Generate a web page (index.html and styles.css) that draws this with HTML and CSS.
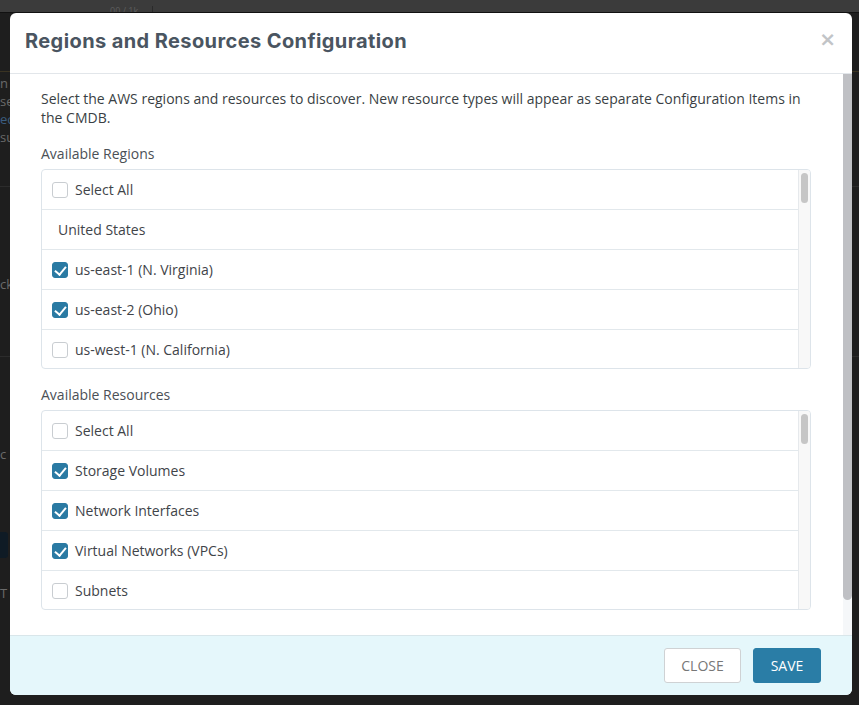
FILE: index.html
```html
<!DOCTYPE html>
<html>
  <head>
    <meta charset="utf-8">
    <title>Regions and Resources Configuration</title>
    <link rel="stylesheet" href="styles.css">
  </head>
  <body>
    <div class="page">
      <div class="page-top">
        <span class="page-count">00 / 1k</span>
      </div>
      <div class="page-main">
        <div class="page-block">
          <p>n</p>
          <p>se</p>
          <p class="page-link">ec</p>
          <p>su</p>
        </div>
        <div class="page-block page-block-tall">
          <p>ck</p>
        </div>
        <div class="page-block page-block-tall">
          <p>c</p>
        </div>
        <div class="page-button"></div>
        <p class="page-foot">T</p>
      </div>
    </div>

    <div class="modal">
      <div class="modal-header">
        <h4 class="modal-title">Regions and Resources Configuration</h4>
        <span class="modal-close">&times;</span>
      </div>

      <div class="modal-main">
        <div class="modal-body">
          <p class="intro">Select the AWS regions and resources to discover. New resource types will appear as separate Configuration Items in the CMDB.</p>

          <div class="field-label">Available Regions</div>
          <div class="pick-box">
            <ul class="pick-list">
              <li><span class="check"></span>Select All</li>
              <li class="group">United States</li>
              <li><span class="check on"></span>us-east-1 (N. Virginia)</li>
              <li><span class="check on"></span>us-east-2 (Ohio)</li>
              <li><span class="check"></span>us-west-1 (N. California)</li>
            </ul>
            <div class="pick-bar"><div class="pick-thumb"></div></div>
          </div>

          <div class="field-label">Available Resources</div>
          <div class="pick-box">
            <ul class="pick-list">
              <li><span class="check"></span>Select All</li>
              <li><span class="check on"></span>Storage Volumes</li>
              <li><span class="check on"></span>Network Interfaces</li>
              <li><span class="check on"></span>Virtual Networks (VPCs)</li>
              <li><span class="check"></span>Subnets</li>
            </ul>
            <div class="pick-bar"><div class="pick-thumb"></div></div>
          </div>
        </div>
        <div class="modal-scroll"><div class="modal-thumb"></div></div>
      </div>

      <div class="modal-footer">
        <button class="btn btn-close">Close</button>
        <button class="btn btn-save">Save</button>
      </div>
    </div>
  </body>
</html>
```

FILE: styles.css
```css
* {
  box-sizing: border-box;
}

body {
  margin: 0;
  background: #1e1e1e;
  font-family: "Open Sans", "Noto Sans", Arial, sans-serif;
  overflow: hidden;
}

/* page behind the dialog, dimmed */
.page {
  height: 705px;
  overflow: hidden;
  color: #6a6a6a;
  font-size: 13px;
}

.page-top {
  height: 13px;
  background: #3b3b3b;
  border-bottom: 1px solid #111;
  overflow: hidden;
}

.page-count {
  display: inline-block;
  margin-left: 110px;
  padding-right: 14px;
  height: 12px;
  border-right: 1px solid #2a2a2a;
  font-size: 9px;
  line-height: 9px;
  color: #5e5e5e;
}

.page-main {
  padding-top: 58px;
}

.page-block {
  border-top: 1px solid #3a3322;
  padding: 2px 0 40px;
}

.page-block p {
  margin: 0;
  line-height: 18px;
}

.page-block-tall {
  border-top-color: #2c2c2c;
  padding-top: 88px;
  height: 170px;
}

.page-link {
  color: #3b5d80;
}

.page-button {
  margin-top: 6px;
  width: 8px;
  height: 26px;
  background: #0f1b25;
  border-radius: 0 3px 3px 0;
}

.page-foot {
  margin: 27px 0 0;
  line-height: 16px;
}

/* dialog */
.modal {
  position: absolute;
  left: 10px;
  top: 13px;
  width: 842px;
  height: 682px;
  background: #fff;
  border-radius: 6px;
  display: flex;
  flex-direction: column;
  overflow: hidden;
}

.modal-header {
  height: 61px;
  flex-shrink: 0;
  display: flex;
  align-items: center;
  justify-content: space-between;
  padding: 0 16px 4px 15px;
  border-bottom: 1px solid #e2e6ea;
}

.modal-title {
  margin: 0;
  font-family: Inter, "Noto Sans", sans-serif;
  font-weight: 700;
  font-size: 20px;
  letter-spacing: 0.4px;
  color: #4a5561;
}

.modal-close {
  font-family: "DejaVu Sans", sans-serif;
  font-size: 20px;
  font-weight: 700;
  color: #c2c4c7;
  margin-top: -4px;
}

.modal-main {
  flex: 1;
  min-height: 0;
  display: flex;
}

.modal-body {
  flex: 1;
  overflow: hidden;
  padding: 15px 32px 0 31px;
  color: #3a3f44;
  font-size: 14px;
}

.modal-scroll {
  width: 9px;
  background: #f5f7f9;
}

.modal-thumb {
  height: 526px;
  background: #bfc0c4;
  border-radius: 0 0 5px 5px;
}

.intro {
  margin: 0 0 17px;
  line-height: 19px;
}

.field-label {
  margin: 0 0 6px;
  line-height: 19px;
  color: #4b5056;
}

.pick-box {
  display: flex;
  height: 200px;
  margin-bottom: 16px;
  border: 1px solid #dde4ea;
  border-radius: 4px;
  overflow: hidden;
}

.pick-list {
  flex: 1;
  list-style: none;
  margin: 0;
  padding: 0;
}

.pick-list li {
  height: 40px;
  display: flex;
  align-items: center;
  padding-left: 10px;
  border-bottom: 1px solid #e2e8ec;
  color: #3f4449;
}

.pick-list li.group {
  padding-left: 16px;
}

.pick-bar {
  width: 12px;
  background: #f8f8f8;
  border-left: 1px solid #e6e9ec;
  padding: 3px 2px 0 2px;
}

.pick-thumb {
  height: 30px;
  background: #c6c6c6;
  border-radius: 4px;
}

.check {
  width: 16px;
  height: 16px;
  margin-right: 7px;
  border: 1px solid #c9cdd1;
  border-radius: 3px;
  background: #fff;
  position: relative;
}

.check.on {
  background: #2a7aa3;
  border-color: #2a7aa3;
}

.check.on::after {
  content: "";
  position: absolute;
  left: 4px;
  top: 1px;
  width: 5px;
  height: 9px;
  border: solid #fff;
  border-width: 0 2px 2px 0;
  transform: rotate(40deg);
}

.modal-footer {
  height: 60px;
  flex-shrink: 0;
  display: flex;
  align-items: center;
  justify-content: flex-end;
  gap: 12px;
  padding: 0 31px 0 0;
  background: #e5f7fb;
  border-top: 1px solid #d9e6ea;
}

.btn {
  height: 35px;
  border-radius: 3px;
  font-family: "Open Sans", sans-serif;
  font-size: 14px;
  text-transform: uppercase;
  padding: 0;
}

.btn-close {
  width: 77px;
  background: #fff;
  border: 1px solid #cfd2d4;
  color: #777;
}

.btn-save {
  width: 68px;
  background: #2a7da6;
  border: 1px solid #2a7da6;
  color: #fff;
}
```
